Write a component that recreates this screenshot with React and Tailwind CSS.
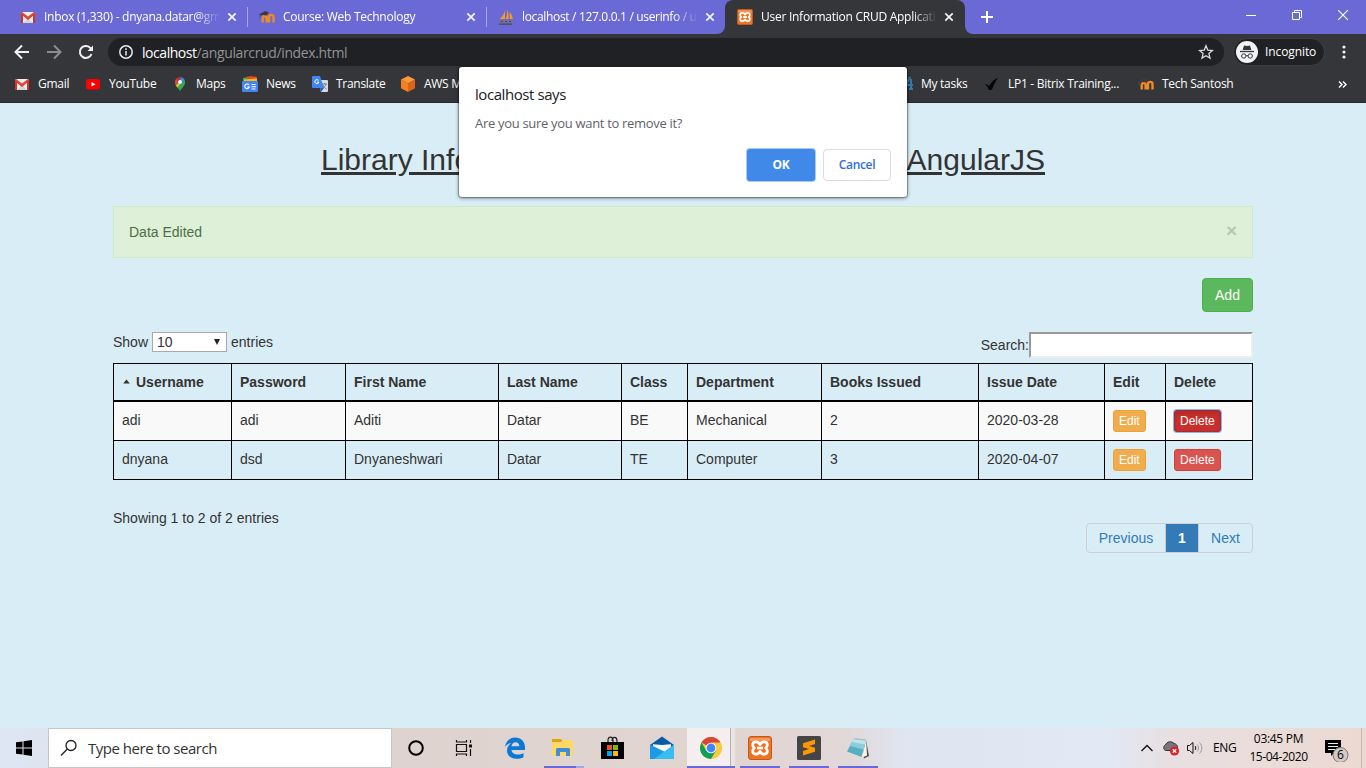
import React from "react";

const Gmail = () => (
  <svg width="16" height="16" viewBox="0 0 16 16" className="shrink-0">
    <path d="M1 3h14v11H1z" fill="#f1f1f1" />
    <path d="M3 14l5-5 5 5z" fill="#d5d5d5" />
    <path d="M1 14V3.400L8 9.200l7-5.800V14h-2V6.800L8 11 3 6.800V14z" fill="#d93025" />
    <path d="M1 3h1.200L8 7.400 13.800 3H15v1.200L8 9.800 1 4.200z" fill="#e04a3f" />
  </svg>
);
const Moodle = () => (
  <svg width="16" height="16" viewBox="0 0 16 16" className="shrink-0">
    <path d="M3.700 13.500V8.500M7.600 13.500V8.500c0-2-3.500-2-3.500 0M10 13.500V8c0-2.800 4.500-2.800 4.500 0v5.500" fill="none" stroke="#f08a24" strokeWidth="2.400" />
    <path d="M0 5.500L6 2l4 1.500-2.500 3-4-.5-1.500.8z" fill="#3c3a3e" />
    <path d="M1 5.500v4" stroke="#555" strokeWidth=".7" />
  </svg>
);
const Sails = () => (
  <svg width="16" height="16" viewBox="0 0 16 16" className="shrink-0">
    <path d="M7 1v9H1.500C4 8 6.500 5 7 1zM9 0c1.500 4 2 7 1.500 10H7.800C9 7 9.400 4 9 0zM11.500 3c2 2 3 4.500 3.300 7h-3z" fill="#f59a23" />
    <path d="M1 11h14l-1 3H2z" fill="#77738f" />
    <path d="M1 15.200h13M3 12.500h2m2 0h2m2 0h2" stroke="#454366" strokeWidth="1.200" />
  </svg>
);
const Xampp = ({ size }) => (
  <svg width={size} height={size} viewBox="0 0 24 24" className="shrink-0">
    <rect x=".5" y=".5" width="23" height="23" rx="2.500" fill="#ee7424" stroke="#c2591a" />
    <path d="M2 2h20v3H2z" fill="#f59a5c" />
    <path d="M8 5.800c-4 0-4.200 4.200-1.700 6.200-2.500 2-2.300 6.200 1.700 6.200 2.500 0 3.200-1.200 4-2.700.8 1.500 1.500 2.700 4 2.700 4 0 4.200-4.200 1.700-6.200 2.500-2 2.300-6.200-1.700-6.200-2.500 0-3.200 1.200-4 2.700-.8-1.500-1.500-2.700-4-2.700z" fill="#ee7424" stroke="#fff" strokeWidth="2.700" strokeLinejoin="round" />
    <path d="M9 12h6" stroke="#fff" strokeWidth="2.700" />
  </svg>
);
const YouTube = () => (
  <svg width="16" height="16" viewBox="0 0 16 16" className="shrink-0">
    <rect x="1" y="3" width="14" height="10.500" rx="2.500" fill="#f00" />
    <path d="M6.500 5.900v4.700l4-2.350z" fill="#fff" />
  </svg>
);
const MapsPin = () => (
  <svg width="16" height="16" viewBox="0 0 16 16" className="shrink-0">
    <path d="M8 15.500c-.6-2.600-5-5-5-9.500h10c0 4.500-4.400 6.900-5 9.500z" fill="#34a853" />
    <path d="M3 6a5 5 0 0 1 1.200-3.300L8 6l-3.600 4C3.500 8.700 3 7.500 3 6z" fill="#ea4335" />
    <path d="M4.200 2.700A5 5 0 0 1 9.500 1.200L6 6z" fill="#c5352b" />
    <path d="M9.500 1.200A5 5 0 0 1 12.700 4L5.400 11.500 4 9.400z" fill="#4285f4" />
    <path d="M12.700 4c.6 1.600.3 3.200-.4 4.500L8 13 5.400 11.500z" fill="#34a853" />
    <path d="M4 9.400L6.500 7 8 8.500l-2.600 3z" fill="#fbbc04" />
    <circle cx="8" cy="5.900" r="1.900" fill="#fff" />
  </svg>
);
const News = () => (
  <svg width="16" height="16" viewBox="0 0 16 16" className="shrink-0">
    <path d="M1 2l9-2 2 6H1z" fill="#34a853" />
    <path d="M5 .5h9.500l.5 4H5z" fill="#ea4335" />
    <path d="M2 3.500l13-1v3H2z" fill="#fbbc04" />
    <rect y="5" width="16" height="11" rx="1" fill="#4285f4" />
    <path d="M7 9a2.300 2.300 0 1 0 .3 2H5.200M9.500 8.500h4M9.500 10.800h4.500M9.500 13h4" fill="none" stroke="#fff" strokeWidth="1.100" />
  </svg>
);
const Translate = () => (
  <svg width="16" height="16" viewBox="0 0 16 16" className="shrink-0">
    <path d="M6 4h9a1 1 0 0 1 1 1v10a1 1 0 0 1-1 1H9z" fill="#d8dade" />
    <path d="M1 0h7l4 12H1a1 1 0 0 1-1-1V1a1 1 0 0 1 1-1z" fill="#4285f4" />
    <path d="M8 12h4l-3 4z" fill="#2a56c6" />
    <path d="M6.500 4.500a2 2 0 1 0 .3 1.700H4.900" fill="none" stroke="#fff" />
    <path d="M10 8h5M12.500 7v1M14 8c-.5 2-2 3.500-3.500 4M11 9c.5 2 2 3 3.500 4" fill="none" stroke="#69788a" strokeWidth=".9" />
  </svg>
);
const Cube = () => (
  <svg width="16" height="16" viewBox="0 0 16 16" className="shrink-0">
    <path d="M8 0l7 3.500L8 7.500 1 3.500z" fill="#fa9a3c" />
    <path d="M1 3.500l7 4V16l-7-3.800z" fill="#f58220" />
    <path d="M15 3.500l-7 4V16l7-3.800z" fill="#dd6414" />
  </svg>
);
const TaskMark = () => (
  <svg width="16" height="16" viewBox="0 0 16 16" className="shrink-0">
    <path d="M13 1L9 9h7M14 3v9M12 13h4" fill="none" stroke="#2d7db3" strokeWidth="2" />
  </svg>
);
const Check = () => (
  <svg width="16" height="16" viewBox="0 0 16 16" className="shrink-0">
    <path d="M1 8.500c1.500-1 3 .5 4 1.500C7.500 6 10.500 3 14 1.800 11.500 5.500 9.500 9.500 8 13.500c-1.500.8-3 .5-3.500 0C4 11.500 3 9.500 1 8.500z" fill="#050505" />
  </svg>
);
const Close = () => (
  <svg width="10" height="10" viewBox="0 0 10 10" className="shrink-0">
    <path d="M1.300 1.300l7.400 7.400M8.700 1.300L1.300 8.700" stroke="#f4f4fb" strokeWidth="1.700" />
  </svg>
);

const tabs = [
  { icon: <Gmail />, title: "Inbox (1,330) - dnyana.datar@gmail.com", cls: "tracking-[-0.27px]" },
  { icon: <Moodle />, title: "Course: Web Technology", cls: "tracking-[-0.26px]" },
  { icon: <Sails />, title: "localhost / 127.0.0.1 / userinfo / users", cls: "tracking-[-0.33px]" },
  { icon: <Xampp size={16} />, title: "User Information CRUD Application", cls: "tracking-[-0.26px]", active: true },
];

function Tab({ icon, title, cls, active, line }) {
  return (
    <div className={"relative flex h-full shrink-0 items-center pl-[12px] " + (active ? "w-[240px] rounded-t-[8px] bg-[#35363a]" : "w-[239px]")}>
      {active && (
        <>
          <svg className="absolute bottom-0 -left-[8px]" width="8" height="8"><path d="M8 0v8H0A8 8 0 0 0 8 0z" fill="#35363a" /></svg>
          <svg className="absolute bottom-0 -right-[8px]" width="8" height="8"><path d="M0 0v8h8A8 8 0 0 1 0 0z" fill="#35363a" /></svg>
        </>
      )}
      {icon}
      <span className={"ml-[8px] w-[176px] shrink-0 overflow-hidden whitespace-nowrap text-[12px] text-white [mask-image:linear-gradient(to_right,black_86%,transparent)] " + cls}>{title}</span>
      <span className="ml-[7px] flex"><Close /></span>
      {line && <span className="absolute -right-px top-[7px] h-[20px] w-px bg-[#a9a6e8]" />}
    </div>
  );
}

const bookmarks = [
  { icon: <Gmail />, t: "Gmail", w: "w-[71px]" },
  { icon: <YouTube />, t: "YouTube", w: "w-[87px]" },
  { icon: <MapsPin />, t: "Maps", w: "w-[70px]" },
  { icon: <News />, t: "News", w: "w-[70px]" },
  { icon: <Translate />, t: "Translate", w: "w-[88px]" },
  { icon: <Cube />, t: "AWS M", w: "w-[497px]" },
  { icon: <TaskMark />, t: "My tasks", w: "w-[87px]" },
  { icon: <Check />, t: "LP1 - Bitrix Training...", w: "w-[154px]" },
  { icon: <Moodle />, t: "Tech Santosh", w: "w-[200px]" },
];

function Browser() {
  return (
    <header className="h-[103px] font-['Open_Sans','Noto_Sans',sans-serif]">
      <div className="flex h-[34px] bg-[#6b69d6] pl-[8px]">
        {tabs.map((t, i) => <Tab key={i} {...t} line={i < 2} />)}
        <div className="flex w-[44px] items-center justify-center">
          <svg width="12" height="12"><path d="M6 0v12M0 6h12" stroke="#fff" strokeWidth="2" /></svg>
        </div>
        <div className="ml-auto flex h-[29px] items-center">
          <span className="flex w-[46px] justify-center"><svg width="10" height="10"><path d="M0 5.500h10" stroke="#fff" /></svg></span>
          <span className="flex w-[46px] justify-center"><svg width="10" height="10" fill="none" stroke="#fff"><path d="M.5 2.500h7v7h-7zM2.500 2.500v-2h7v7h-2" /></svg></span>
          <span className="flex w-[46px] justify-center"><svg width="10" height="10"><path d="M0 0l10 10M10 0L0 10" stroke="#fff" strokeWidth="1.100" /></svg></span>
        </div>
      </div>
      <div className="flex h-[36px] items-center bg-[#35363a]">
        <svg width="84" height="16" className="ml-[14px] shrink-0" fill="none" strokeWidth="2">
          <path d="M15 8H2.500M8 1.500L1.500 8 8 14.500" stroke="#f1f1f1" />
          <path d="M33 8h12.500M40 1.500L46.500 8 40 14.500" stroke="#8b8c8f" />
          <path d="M77.500 10A6 6 0 1 1 76 3.600L78.500 6" stroke="#f1f1f1" />
          <path d="M79 1.500V7h-5.500z" fill="#f1f1f1" />
        </svg>
        <div className="ml-[10px] flex h-[28px] w-[1116px] items-center rounded-full bg-[#202124] pl-[11px] pr-[10px] text-[14px]">
          <svg width="14" height="14"><circle cx="7" cy="7" r="6.200" fill="none" stroke="#e8eaed" strokeWidth="1.500" /><path d="M7 6v4.500M7 3.300v1.600" stroke="#e8eaed" strokeWidth="1.500" /></svg>
          <span className="ml-[9px] tracking-[-0.45px] text-white">localhost</span>
          <span className="tracking-[-0.37px] text-[#919396]">/angularcrud/index.html</span>
          <svg width="16" height="16" className="ml-auto"><path d="M8 1.800l1.800 4.300 4.700.4-3.600 3.100 1.100 4.500L8 11.700l-4 2.400 1.100-4.500L1.500 6.500l4.700-.4z" fill="none" stroke="#dadce0" strokeWidth="1.300" /></svg>
        </div>
        <div className="ml-[9px] flex h-[28px] w-[92px] items-center rounded-full border border-[#3e3f43] bg-[#202124] pl-[2px]">
          <svg width="22" height="22" className="shrink-0"><circle cx="11" cy="11" r="11" fill="#f1f3f4" /><path d="M8 4.500l3 .6 3-.6 1.300 4.500H6.700z" fill="#35363a" /><path d="M4 10.500h14" stroke="#35363a" strokeWidth="1.300" /><g fill="none" stroke="#35363a"><circle cx="7.800" cy="15" r="2.200" /><circle cx="14.200" cy="15" r="2.200" /><path d="M10 14.700h2" /></g></svg>
          <span className="ml-[7px] text-[12px] tracking-[-0.1px] text-white">Incognito</span>
        </div>
        <svg width="4" height="14" className="ml-[17px]" fill="#f1f1f1"><circle cx="2" cy="2" r="1.600" /><circle cx="2" cy="7" r="1.600" /><circle cx="2" cy="12" r="1.600" /></svg>
      </div>
      <div className="flex h-[33px] items-center border-b border-[#28292c] bg-[#35363a] pb-[4px] pl-[14px]">
        {bookmarks.map((b, i) => (
          <div key={i} className={"flex shrink-0 items-center " + b.w}>
            {b.icon}
            <span className="ml-[8px] whitespace-nowrap text-[12px] tracking-[-0.28px] text-white">{b.t}</span>
          </div>
        ))}
        <svg width="9" height="7" className="shrink-0"><path d="M1 .5l3 3-3 3M5 .5l3 3-3 3" fill="none" stroke="#fff" strokeWidth="1.400" /></svg>
      </div>
    </header>
  );
}

const cols = [
  ["Username", "w-[118px]"], ["Password", "w-[114px]"], ["First Name", "w-[153px]"], ["Last Name", "w-[123px]"], ["Class", "w-[66px]"],
  ["Department", "w-[134px]"], ["Books Issued", "w-[157px]"], ["Issue Date", "w-[126px]"], ["Edit", "w-[61px]"], ["Delete", "w-[88px]"],
];
const rows = [
  ["adi", "adi", "Aditi", "Datar", "BE", "Mechanical", "2", "2020-03-28"],
  ["dnyana", "dsd", "Dnyaneshwari", "Datar", "TE", "Computer", "3", "2020-04-07"],
];
const cell = "border-b border-l border-black px-[8px] last:border-r ";
const small = "block h-[22px] rounded-[3px] border px-[5px] text-[12px] leading-[20px] text-white ";

function Page() {
  return (
    <main className="flex h-[625px] flex-col bg-[#d9edf7] px-[113px] font-['Liberation_Sans',Arial,sans-serif] text-[14px] leading-[20px] text-[#333]">
      <h2 className="mx-auto mt-[40px] flex h-[33px] w-[724px] justify-between text-[30px] leading-[33px] underline">
        <span>Library Info</span><span>AngularJS</span>
      </h2>
      <div className="mt-[30px] flex h-[52px] items-center justify-between rounded-[1px] border border-[#d0e9c6] bg-[#dff0d8] px-[15px] text-[#3c763d]">
        <span className="text-[#4a6f48]">Data Edited</span>
        <span className="pb-[4px] text-[19px] font-bold leading-[21px] text-[#b8c6b3]">×</span>
      </div>
      <button className="mt-[20px] h-[34px] w-[51px] self-end rounded-[4px] border border-[#4cae4c] bg-[#5cb85c] text-white">Add</button>
      <div className="mt-[20px] flex h-[31px] justify-between">
        <div className="flex h-[20px] items-center">
          Show
          <span className="ml-[4px] mr-[4px] flex h-[20px] w-[75px] items-center justify-between border border-[#a9a9a9] bg-white pl-[4px] pr-[6px]">
            10<svg width="6" height="6"><path d="M0 0h6L3 6z" fill="#222" /></svg>
          </span>
          entries
        </div>
        <label className="flex h-[26px] items-center">
          Search:<input className="h-[26px] w-[224px] border-2 border-b-[#eee] border-l-[#9a9a9a] border-r-[#eee] border-t-[#9a9a9a] bg-white" />
        </label>
      </div>
      <table className="w-[1140px] table-fixed border-separate border-spacing-0 text-left">
        <thead>
          <tr className="h-[39px]">
            {cols.map(([n, w], i) => (
              <th key={n} className={"border-b-2 border-l border-t border-black px-[8px] font-bold last:border-r " + w}>
                <span className="flex items-center whitespace-nowrap">
                  {i === 0 && <svg width="14" height="12"><path d="M1.200 7.500L4.500 3.500 7.800 7.500z" fill="#333" /></svg>}
                  {n}
                </span>
              </th>
            ))}
          </tr>
        </thead>
        <tbody>
          {rows.map((r, i) => (
            <tr key={i} className={"h-[39px] " + (i === 0 ? "bg-[#f9f9f9]" : "")}>
              {r.map((c, j) => <td key={j} className={cell + "pb-[2px]"}>{c}</td>)}
              <td className={cell}><button className={small + "border-[#eea236] bg-[#f0ad4e]"}>Edit</button></td>
              <td className={cell}>
                <button className={small + (i === 0 ? "border-[#a02c3c] bg-[#c9302c] shadow-[inset_0_3px_5px_rgba(0,0,0,0.125),0_0_0_1px_#8fb4ec]" : "border-[#d43f3a] bg-[#d9534f]")}>Delete</button>
              </td>
            </tr>
          ))}
        </tbody>
      </table>
      <div className="mt-[28px] flex items-start justify-between">
        <span>Showing 1 to 2 of 2 entries</span>
        <div className="mt-[15px] flex h-[30px] overflow-hidden rounded-[4px] border border-[#ccd0d2] leading-[28px] text-[#337ab7]">
          <span className="w-[78px] text-center">Previous</span>
          <span className="w-[34px] border-x border-x-[#c5cdd3] bg-[#337ab7] text-center font-bold text-white">1</span>
          <span className="w-[53px] text-center">Next</span>
        </div>
      </div>
    </main>
  );
}

function Dialog() {
  return (
    <div className="absolute left-[459px] top-[67px] flex h-[130px] w-[448px] flex-col rounded-[3px] bg-white px-[16px] font-['Open_Sans','Noto_Sans',sans-serif] shadow-[0_1px_4px_rgba(0,0,0,0.45),0_0_1px_1px_rgba(0,0,0,0.3)]">
      <p className="mt-[17px] text-[15px] leading-[20px] tracking-[-0.43px] text-[#202124]">localhost says</p>
      <p className="mt-[9px] text-[13px] leading-[20px] tracking-[-0.31px] text-[#5f6368]">Are you sure you want to remove it?</p>
      <div className="mt-[16px] flex justify-end gap-[8px] text-[12px]">
        <span className="h-[32px] w-[68px] rounded-[3px] bg-[#4189e9] text-center font-bold leading-[31px] tracking-[-0.3px] text-white shadow-[0_0_0_1px_#a8c8f6]">OK</span>
        <span className="h-[32px] w-[68px] rounded-[4px] border border-[#dadce0] text-center font-semibold leading-[29px] tracking-[-0.35px] text-[#2f6de0]">Cancel</span>
      </div>
    </div>
  );
}

const Edge = () => <svg width="22" height="22" viewBox="0 0 22 22"><path d="M1 10C2 4 6 .5 11 .5c6 0 10 4 10 10V13H7.500c.3 3 3 4.500 6 4.500 2.300 0 4.300-.6 6-1.600v4.300c-2 1-4.500 1.500-7 1.500C6.500 21.700 3 18 3 13.500c0-3 1.500-5.700 4.500-7.500C4.500 6.400 2.500 8 1 10zm6.500-.7h7.800c0-2.700-1.500-4-3.800-4S7.800 7 7.500 9.300z" fill="#0a78d7" /></svg>;
const Folder = () => <svg width="22" height="20" viewBox="0 0 22 20"><path d="M0 1h9l1 1v5H0z" fill="#e5a00e" /><path d="M0 4h9l1.500-2H21v16H0z" fill="#ffd868" /><path d="M4 18v-7l1-1h12l1 1v7h-4v-4H8v4z" fill="#3e8fd8" /></svg>;
const Store = () => <svg width="24" height="24" viewBox="0 0 24 24"><path d="M8 7V4.500C8 0 13 0 13 4.500V7M12 5c0-5 5-4.500 5 0v2" fill="none" stroke="#222" strokeWidth="1.200" /><path d="M1 6h23v17H1z" fill="#000" /><path d="M7 9h5v5H7z" fill="#f25022" /><path d="M13 9h5v5h-5z" fill="#7fba00" /><path d="M7 15h5v5H7z" fill="#00a4ef" /><path d="M13 15h5v5h-5z" fill="#ffb900" /></svg>;
const Mail = () => <svg width="24" height="24" viewBox="0 0 24 24"><path d="M0 9l12-8.500L24 9v3H0z" fill="#0a5aa6" /><path d="M3 8h18v8H3z" fill="#f5f7f9" /><path d="M1 8h22L12 9z" fill="#0a5aa6" /><path d="M0 8.500L15 16 11 23H0z" fill="#1b9be6" /><path d="M24 8.500V23H4z" fill="#39bdf0" /></svg>;
const Chrome = () => <svg width="22" height="22" viewBox="0 0 22 22"><circle cx="11" cy="11" r="11" fill="#fbc93a" /><path d="M11 11L1.500 5.500A11 11 0 0 1 20.500 5.500H11z" fill="#db4437" /><path d="M1.500 5.500A11 11 0 0 0 11 22l4.800-8.300L11 11l-4.700 2.700z" fill="#0f9d58" /><circle cx="11" cy="11" r="5.300" fill="#fff" /><circle cx="11" cy="11" r="4.400" fill="#4285f4" /></svg>;
const Sublime = () => <svg width="24" height="24" viewBox="0 0 24 24"><rect width="24" height="24" rx="1.500" fill="#454545" /><path d="M18 3.500v4.500l-6 2 6 1.800v4L6 19.500V15l6-2-6-1.800v-4z" fill="#ff9800" /></svg>;
const Note = () => <svg width="24" height="24" viewBox="0 0 24 24"><path d="M20 4l3 16-5 2.500L17 18z" fill="#5a5142" /><path d="M20 3.500l1 16-5 2z" fill="#f7f3e6" /><path d="M7.500 3L20 4.500 15.500 21 1 15.500z" fill="#56b0c2" /><path d="M7.500 3L20 4.500 17.500 13.500 4 10z" fill="#8ccddb" /><path d="M7.500 3L20 4.500l-1 4L6 6z" fill="#bce5ec" /><path d="M8 2.500l12 1.500" stroke="#aab6b8" /></svg>;

const apps = [
  { icon: <svg width="18" height="18"><circle cx="9" cy="9" r="6.800" fill="none" stroke="#000" strokeWidth="2" /></svg> },
  { icon: <svg width="19" height="18" fill="none" stroke="#111" strokeWidth="1.200"><path d="M1.500 5.500h10v7h-10zM1.500 1v2h10V1M1.500 17v-2h10v2M15.500 1v3M15.500 10v7" /><path d="M14 5.500h3v3h-3z" fill="#111" stroke="none" /></svg> },
  { icon: <Edge />, pad: "pl-[2px]" },
  { icon: <Folder />, bar: true, extra: true },
  { icon: <Store /> },
  { icon: <Mail />, pad: "pl-[2px]" },
  { icon: <Chrome />, active: true, pad: "pl-[2px]" },
  { icon: <Xampp size={24} />, bar: true, pad: "pl-[2px]" },
  { icon: <Sublime />, bar: true, pad: "pl-[2px]" },
  { icon: <Note />, bar: true, pad: "pl-[2px]" },
];

function Taskbar() {
  return (
    <footer className="flex h-[40px] bg-[linear-gradient(90deg,#dde6f3_0px,#dfe3ee_90px,#dfd3d0_390px,#e1d5d2_740px,#e1d8d8_850px,#dfe5f0_900px,#e2e8f4_1110px,#e8dfe1_1170px,#ecd9d1_1366px)] font-['Open_Sans','Noto_Sans',sans-serif] text-black">
      <div className="flex w-[48px] items-center justify-center">
        <svg width="16" height="16"><path d="M0 2.300L6.500 1.400v6.100H0zM7.500 1.200L16 0v7.500H7.500zM0 8.500h6.500v6.100L0 13.700zM7.500 8.500H16V16l-8.500-1.200z" /></svg>
      </div>
      <div className="flex w-[344px] items-center border border-[#c6c6c6] bg-white pl-[11px]">
        <svg width="18" height="18"><circle cx="11" cy="6.500" r="5" fill="none" stroke="#222" strokeWidth="1.300" /><path d="M7.300 10L1 16.500" stroke="#222" strokeWidth="1.300" /></svg>
        <span className="ml-[10px] text-[15px] tracking-[-0.48px] text-[#333]">Type here to search</span>
      </div>
      <div className="-ml-[1px] flex">
        {apps.map((a, i) => (
          <div key={i} className={"relative flex w-[49px] items-center justify-center " + (a.pad || "")}>
            {a.active && <span className="absolute inset-y-0 left-[2px] w-[44px] border-r border-[#b9b2b3] bg-[#f4eeee]" />}
            {a.active && <span className="absolute inset-y-0 left-[46px] w-[4px] bg-[#ece4e4]" />}
            {a.active && <span className="absolute bottom-0 left-[2px] h-[2px] w-[48px] bg-[#6b69d6]" />}
            <span className="relative">{a.icon}</span>
            {a.bar && <span className="absolute bottom-0 left-[6px] h-[2px] w-[40px] bg-[#6b69d6]" />}
            {a.extra && <span className="absolute bottom-0 left-[38px] h-[2px] w-[8px] bg-[#a6a4e6]" />}
          </div>
        ))}
      </div>
      <div className="ml-auto flex items-center">
        <svg width="14" height="8"><path d="M1.500 7L7 1.500 12.500 7" fill="none" stroke="#111" strokeWidth="1.300" /></svg>
        <svg width="18" height="16" className="ml-[8px]"><path d="M3.500 10.500a3 3 0 0 1 0-5.500A5 5 0 0 1 12 3.500 4 4 0 0 1 15.500 8L13 10.500z" fill="#777" stroke="#333" /><circle cx="12.500" cy="11" r="4.600" fill="#dc2330" /><path d="M10.800 9.300l3.400 3.400M14.200 9.300l-3.400 3.400" stroke="#fff" strokeWidth="1.300" /></svg>
        <svg width="18" height="14" className="ml-[6px]" fill="none" stroke="#111"><path d="M1.500 4.500h2l3.500-3v11l-3.500-3h-2zM9 5c1 1 1 3 0 4" /><path d="M11 3.500c2 2 2 5 0 7M13.500 1.500c3 3 3 8 0 11" stroke="#999" /></svg>
        <span className="ml-[9px] w-[25px] text-[12px] tracking-[-0.4px]">ENG</span>
        <div className="ml-[9px] w-[63px] whitespace-nowrap text-center text-[12px] leading-[18px] tracking-[-0.45px]"><div className="tracking-[-0.3px]">03:45 PM</div><div>15-04-2020</div></div>
        <div className="relative ml-[13px] h-[28px] w-[26px]">
          <svg width="26" height="28"><path d="M2 6h16v13h-7l-3 3v-3H2z" fill="#000" /><path d="M5 9.500h10M5 12.500h10M5 15.500h7" stroke="#eee" /><circle cx="17.500" cy="21" r="7.500" fill="#d2c8c5" stroke="#777" /></svg>
          <span className="absolute left-[14px] top-[13px] text-[12px] leading-[16px]">6</span>
        </div>
        <span className="ml-[12px] mr-[4px] h-[40px] w-px bg-[#c5b9b6]" />
      </div>
    </footer>
  );
}

export default function App() {
  return (
    <div className="relative h-[768px] w-[1366px] overflow-hidden">
      <Browser />
      <Page />
      <Taskbar />
      <Dialog />
    </div>
  );
}
